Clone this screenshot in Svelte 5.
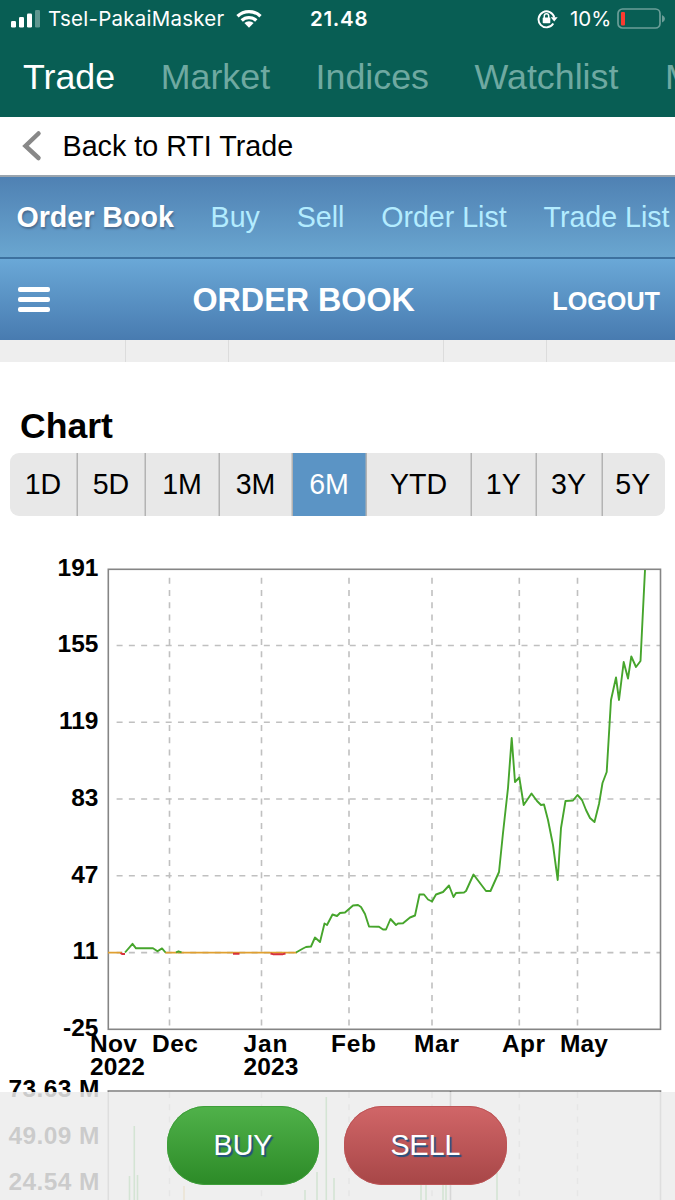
<script lang="ts">
  const sections = ["Trade", "Market", "Indices", "Watchlist", "Movers"];
  const tradeLinks = ["Order Book", "Buy", "Sell", "Order List", "Trade List"];

  const ranges = [
    { label: "1D", size: 68 },
    { label: "5D", size: 68 },
    { label: "1M", size: 74 },
    { label: "3M", size: 73 },
    { label: "6M", size: 74 },
    { label: "YTD", size: 105 },
    { label: "1Y", size: 64.5 },
    { label: "3Y", size: 66 },
    { label: "5Y", size: 62.5 },
  ];
  let activeRange = $state("6M");

  const prices = [
    { label: "191", y: 569 },
    { label: "155", y: 645.5 },
    { label: "119", y: 722.3 },
    { label: "83", y: 799 },
    { label: "47", y: 875.8 },
    { label: "11", y: 952.6 },
    { label: "-25", y: 1029 },
  ];

  const months = [
    { label: "Nov", x: 90, width: 47, year: "2022" },
    { label: "Dec", x: 152, width: 46, grid: 169.5 },
    { label: "Jan", x: 243.5, width: 44, year: "2023", grid: 261.5 },
    { label: "Feb", x: 331, width: 45, grid: 349 },
    { label: "Mar", x: 414, width: 45, grid: 432 },
    { label: "Apr", x: 502, width: 43, grid: 519.3 },
    { label: "May", x: 560, width: 48, grid: 577.5 },
  ];

  const volumes = [
    { label: "73.63 M", y: 1097 },
    { label: "49.09 M", y: 1143.5 },
    { label: "24.54 M", y: 1190 },
  ];

  const volumeBars = [
    { x: 129.5, top: 1176, color: "#3fae3f" },
    { x: 134.3, top: 1126, color: "#3fae3f" },
    { x: 137.5, top: 1175, color: "#3fae3f" },
    { x: 184, top: 1186, color: "#e0b040" },
    { x: 305, top: 1190, color: "#3fae3f" },
    { x: 317, top: 1172, color: "#3fae3f" },
    { x: 326.3, top: 1097, color: "#3fae3f" },
    { x: 334, top: 1178, color: "#3fae3f" },
    { x: 421, top: 1180, color: "#3fae3f" },
    { x: 426, top: 1175, color: "#3fae3f" },
    { x: 443, top: 1165, color: "#3fae3f" },
    { x: 446, top: 1170, color: "#3fae3f" },
    { x: 450.5, top: 1091, color: "#555" },
    { x: 497, top: 1160, color: "#3fae3f" },
  ];

  const rising =
    "296,952.5 303,948.5 306,947 311,946.5 315,937.5 320,942 324.5,923.5 327,925 332.5,914.5 337,916 340,913 345,912.5 349,909 353,905.5 358,905 361,907 365,914 369,926.5 379,926.8 383,929.5 386,929.5 390.5,919 396,925 398,923.5 403,923.3 410,917.5 415,915.5 419.5,894.5 424,894.5 428,899.5 432,901.5 436,894.5 443,892 449,885.5 453.5,897 456,893 464,892.5 466,891 473.5,874.5 486,891 490.5,891 499,872 503,833 508,788 511.7,738 515,782 519.3,777.5 523.7,805 531.5,793.5 537,801 541,805 544,804.5 548,820 553,845 557.7,880 561,828 565.5,801 573,800.5 577.5,795 582,800 586,810 590,818 594.5,822 599,804 602.5,783 606.7,772 611,700 616,677.5 619,700 623.7,662 628,678.5 631.3,656.5 636,667 640.5,661 643,610 645,570";
</script>

<header class="app-header">
  <div class="status">
    <svg class="signal" width="31" height="18" viewBox="0 0 31 18">
      <rect x="1" y="11" width="5" height="6.5" rx="1.3" />
      <rect x="9" y="7" width="5" height="10.5" rx="1.3" />
      <rect x="17" y="3.5" width="5" height="14" rx="1.3" />
      <rect x="25" y="0" width="5" height="17.5" rx="1.3" opacity="0.35" />
    </svg>
    <span class="carrier">Tsel-PakaiMasker</span>
    <svg class="wifi" width="26" height="19" viewBox="0 0 26 19">
      <path d="M1.5 7.2 A16.5 16.5 0 0 1 24.5 7.2" />
      <path d="M5.7 11.5 A10.5 10.5 0 0 1 20.3 11.5" />
      <path class="dot" d="M8.4 14.1 A6.6 6.6 0 0 1 17.6 14.1 L13 18.8 Z" />
    </svg>
    <span class="clock">21.48</span>
    <svg class="lock" width="21" height="20" viewBox="0 0 21 20">
      <path d="M16.3 14.6 A8 8 0 1 1 17.3 8.5" />
      <path class="solid" d="M13.7 8.2 H20.7 L17.2 12.4 Z" />
      <rect class="solid" x="5.7" y="8.6" width="7.6" height="5.6" rx="0.8" />
      <path class="shackle" d="M7.3 9 V7 a2.2 2.2 0 0 1 4.4 0 V9" />
    </svg>
    <span class="percent">10%</span>
    <svg class="battery" width="49" height="22" viewBox="0 0 49 22">
      <rect class="shell" x="1" y="1" width="42" height="19" rx="4.5" />
      <rect class="level" x="4" y="4" width="4" height="13.5" rx="1" />
      <path class="tip" d="M45 7 Q48 8.5 48 10.7 Q48 13 45 14.5 Z" />
    </svg>
  </div>
  <nav class="sections">
    {#each sections as section, i}
      <span class:current={i === 0}>{section}</span>
    {/each}
  </nav>
</header>

<div class="back">
  <svg width="20" height="32" viewBox="0 0 20 32">
    <path d="M16.5 3.5 L3.5 16 L16.5 28" />
  </svg>
  <span>Back to RTI Trade</span>
</div>

<nav class="trade-nav">
  {#each tradeLinks as link, i}
    <span class:current={i === 0}>{link}</span>
  {/each}
</nav>

<div class="title-bar">
  <div class="burger"><i></i><i></i><i></i></div>
  <h1>ORDER BOOK</h1>
  <span class="logout">LOGOUT</span>
</div>

<div class="table-edge"><i></i><i></i><i></i><i></i></div>

<h2>Chart</h2>

<div class="ranges">
  {#each ranges as range}
    <button
      class:active={activeRange === range.label}
      style:flex-grow={range.size}
      onclick={() => (activeRange = range.label)}
    >
      {range.label}
    </button>
  {/each}
</div>

<svg class="chart" width="675" height="660" viewBox="0 540 675 660">
  <g class="grid">
    {#each prices.slice(1, -1) as price}
      <line x1="116.6" x2="660" y1={price.y} y2={price.y} />
    {/each}
    {#each months as month}
      {#if month.grid}
        <line x1={month.grid} x2={month.grid} y1="577.7" y2="1028" />
        <line x1={month.grid} x2={month.grid} y1="1092" y2="1200" />
      {/if}
    {/each}
  </g>

  {#each volumeBars as bar}
    <line x1={bar.x} x2={bar.x} y1={bar.top} y2="1200" stroke={bar.color} stroke-width="1.6" />
  {/each}

  <rect class="frame" x="108.3" y="569.3" width="552.2" height="460" />
  <rect class="frame" x="108.3" y="1091" width="552.2" height="140" />

  <g class="series">
    <path class="flat" d="M108 952.6 H122 M165 952.6 H297" />
    <path class="down" d="M120.5 953 L122 954 H125 M233 953.8 H239.5 M270.5 953.5 L273 954.2 H283 L285.5 953.5" />
    <polyline points="125,952.5 132.5,943.8 136,948.3 153,948.3 157.5,951.3 162,948.4 165.5,952.5" />
    <polyline points="176,952.3 178.5,951.3 181.5,952.3" />
    <polyline points={rising} />
  </g>

  <g class="labels">
    {#each prices as price}
      <text x="98.5" y={price.y + 6.8} text-anchor="end">{price.label}</text>
    {/each}
    {#each months as month}
      <text x={month.x} y="1051.5" textLength={month.width}>{month.label}</text>
      {#if month.year}
        <text x={month.x} y="1074.5" textLength="55">{month.year}</text>
      {/if}
    {/each}
    {#each volumes as volume}
      <text x="8.5" y={volume.y} textLength="91">{volume.label}</text>
    {/each}
  </g>
</svg>

<footer>
  <button class="buy">BUY</button>
  <button class="sell">SELL</button>
</footer>

<style>
  :global(body) {
    height: 1200px;
    overflow: hidden;
    background: #fff;
    font-family: "Liberation Sans", Arial, sans-serif;
    color: #000;
  }

  button {
    padding: 0;
    border: 0;
    font: inherit;
  }

  .app-header {
    height: 117px;
    overflow: hidden;
    background: #085e54;
    color: #fff;
  }

  .status {
    display: flex;
    align-items: center;
    height: 37px;
    padding-left: 10px;
    font-family: Inter, sans-serif;
    font-size: 20.5px;
    white-space: nowrap;
  }

  .status svg {
    flex: none;
    fill: none;
  }

  .status .signal {
    fill: #fff;
  }

  .carrier {
    width: 188px;
    margin-left: 7px;
    letter-spacing: 0.25px;
  }

  .wifi path {
    stroke: #fff;
    stroke-width: 3.3;
  }

  .wifi .dot {
    stroke: none;
    fill: #fff;
  }

  .clock {
    width: 227px;
    margin-left: 48px;
    font-weight: 600;
    letter-spacing: 0.7px;
  }

  .lock path {
    stroke: #fff;
    stroke-width: 1.9;
  }

  .lock .solid {
    stroke: none;
    fill: #fff;
  }

  .lock .shackle {
    stroke-width: 1.5;
  }

  .percent {
    width: 42px;
    margin-left: 12px;
    margin-right: 5px;
  }

  .shell {
    stroke: #6b9e98;
    stroke-width: 1.7;
  }

  .level {
    fill: #fb3b30;
  }

  .tip {
    fill: #6b9e98;
  }

  .sections {
    display: flex;
    gap: 45.5px;
    padding-left: 23px;
    font-size: 35.8px;
    line-height: 80px;
    white-space: nowrap;
    color: #6fa9a1;
  }

  .sections .current {
    color: #fff;
  }

  .sections span:last-child {
    padding-left: 1px;
  }

  .back {
    display: flex;
    align-items: center;
    gap: 20.5px;
    height: 58px;
    padding-left: 22px;
    font-size: 28.7px;
  }

  .back svg {
    fill: none;
    stroke: #888;
    stroke-width: 4.5;
    stroke-linecap: round;
  }

  .trade-nav {
    display: flex;
    gap: 36.8px;
    box-sizing: border-box;
    height: 84px;
    padding-left: 16.5px;
    border-top: 2px solid #9ba5ae;
    border-bottom: 2px solid #3d719f;
    background: linear-gradient(#4f81b3, #6aa6d0);
    font-size: 28.6px;
    line-height: 80px;
    white-space: nowrap;
    color: #b3ecff;
  }

  .trade-nav .current {
    font-weight: bold;
    color: #fff;
    text-shadow: 1px 2px 2px rgba(60, 80, 110, 0.6);
  }

  .title-bar {
    display: flex;
    align-items: center;
    justify-content: space-between;
    height: 81px;
    padding: 0 15px 0 18px;
    background: linear-gradient(#6aa8d7, #487bb0);
    color: #fff;
  }

  .burger {
    display: grid;
    gap: 5px;
    width: 32px;
  }

  .burger i {
    height: 5px;
    border-radius: 2px;
    background: #fff;
  }

  h1 {
    margin: 0;
    padding: 2px 0 0 5px;
    font-size: 32.3px;
    line-height: 79px;
  }

  .logout {
    padding-top: 3px;
    font-size: 25.2px;
    font-weight: bold;
  }

  .table-edge {
    display: grid;
    grid-template-columns: 126px 103px 215px 103px 1fr;
    height: 22px;
    background: #eee;
  }

  .table-edge i {
    border-right: 1.5px solid #dcdcdc;
  }

  h2 {
    margin: 44px 0 6.5px 20px;
    font-size: 35.6px;
    line-height: 40px;
  }

  .ranges {
    display: flex;
    height: 63px;
    margin: 0 10px 24.5px;
    border-radius: 9px;
    overflow: hidden;
  }

  .ranges button {
    flex-basis: 0;
    background: #e8e8e8;
    box-shadow: inset -1.5px 0 #b3b3b3;
    font-size: 28.6px;
    text-indent: -2px;
    color: #000;
  }

  .ranges button:last-child {
    box-shadow: none;
  }

  .ranges .active {
    background: #5b94c5;
    color: #fff;
  }

  .chart {
    display: block;
  }

  .grid line {
    stroke: #c0c0c0;
    stroke-width: 1.6;
    stroke-dasharray: 6 6.27;
  }

  .frame {
    fill: none;
    stroke: #858585;
    stroke-width: 1.6;
  }

  .series {
    fill: none;
    stroke: #46a52c;
    stroke-width: 1.9;
    stroke-linejoin: round;
  }

  .series .flat {
    stroke: #e0a030;
  }

  .series .down {
    stroke: #d8303c;
  }

  .labels {
    font-size: 24.5px;
    font-weight: bold;
  }

  footer {
    position: fixed;
    right: 0;
    bottom: 0;
    left: 0;
    display: flex;
    gap: 25px;
    box-sizing: border-box;
    height: 108px;
    padding: 14px 0 15px 167px;
    background: rgba(236, 236, 236, 0.86);
  }

  footer button {
    width: 152px;
    border-radius: 38px;
    font-size: 28.6px;
    color: #fff;
    text-shadow: 2px 2px 1px #235080;
  }

  .buy {
    background: linear-gradient(#50b24a, #2c8a27);
    box-shadow: inset 0 0 0 1px #3f9f3b;
  }

  footer .sell {
    width: 163px;
    background: linear-gradient(#d16668, #a74647);
    box-shadow: inset 0 0 0 1px #bd5557;
  }
</style>
